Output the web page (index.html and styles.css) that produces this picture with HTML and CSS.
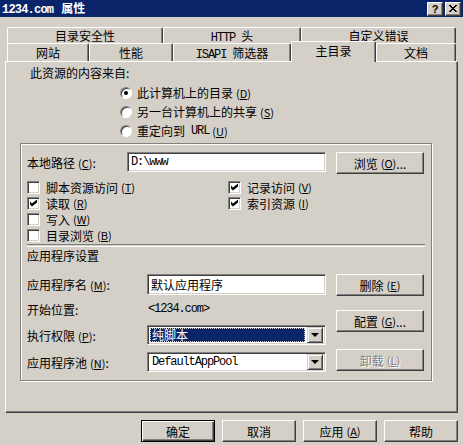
FILE: index.html
```html
<!DOCTYPE html>
<html>
<head>
    <meta charset="UTF-8">
    <title>1234.com 属性</title>
    <link rel="stylesheet" href="styles.css">
</head>
<body>
    <div class="window">
        <div class="titlebar">
            <span class="title"><span class="mono gap">1234.com</span>属性</span>
            <div class="caption-buttons">
                <span class="cap-btn">?</span>
                <span class="cap-btn">
                    <svg width="8" height="7" viewBox="0 0 8 7" shape-rendering="crispEdges">
                        <path d="M0 0h2v1h-2zM6 0h2v1h-2zM1 1h2v1h-2zM5 1h2v1h-2zM2 2h4v1h-4zM3 3h2v1h-2zM2 4h4v1h-4zM1 5h2v1h-2zM5 5h2v1h-2zM0 6h2v1h-2zM6 6h2v1h-2z" fill="#000"/>
                    </svg>
                </span>
            </div>
        </div>

        <div class="tabs">
            <div class="tab-row back">
                <div class="tab" style="width:156px">目录安全性</div>
                <div class="tab" style="width:138px"><span class="mono gap">HTTP</span>头</div>
                <div class="tab" style="width:155px">自定义错误</div>
            </div>
            <div class="tab-row front">
                <div class="tab" style="width:82px">网站</div>
                <div class="tab" style="width:84px">性能</div>
                <div class="tab" style="width:118px"><span class="mono gap">ISAPI</span>筛选器</div>
                <div class="tab active" style="width:85px">主目录</div>
                <div class="tab" style="width:80px">文档</div>
            </div>
        </div>

        <div class="panel">
            <div class="source-label">此资源的内容来自:</div>
            <div class="radio-list">
                <div class="radio-row"><span class="radio checked"></span>此计算机上的目录<span class="key">(<u>D</u>)</span></div>
                <div class="radio-row"><span class="radio"></span>另一台计算机上的共享<span class="key">(<u>S</u>)</span></div>
                <div class="radio-row"><span class="radio"></span>重定向到<span class="mono lead">URL</span><span class="key">(<u>U</u>)</span></div>
            </div>

            <div class="group">
                <div class="path-row">
                    <span class="path-label">本地路径<span class="key">(<u>C</u>)</span>:</span>
                    <div class="field path-field mono">D:\www</div>
                    <span class="btn browse-btn">浏览<span class="key">(<u>O</u>)</span>...</span>
                </div>

                <div class="checks">
                    <div class="check-col">
                        <div class="check-row"><span class="checkbox"></span>脚本资源访问<span class="key">(<u>T</u>)</span></div>
                        <div class="check-row"><span class="checkbox checked"></span>读取<span class="key">(<u>R</u>)</span></div>
                        <div class="check-row"><span class="checkbox"></span>写入<span class="key">(<u>W</u>)</span></div>
                        <div class="check-row"><span class="checkbox"></span>目录浏览<span class="key">(<u>B</u>)</span></div>
                    </div>
                    <div class="check-col right">
                        <div class="check-row"><span class="checkbox checked"></span>记录访问<span class="key">(<u>V</u>)</span></div>
                        <div class="check-row"><span class="checkbox checked"></span>索引资源<span class="key">(<u>I</u>)</span></div>
                    </div>
                </div>

                <div class="separator"></div>
                <div class="app-title">应用程序设置</div>

                <div class="app">
                    <div class="app-fields">
                        <div class="app-row name-row">
                            <span class="app-label">应用程序名<span class="key">(<u>M</u>)</span>:</span>
                            <div class="field app-field">默认应用程序</div>
                        </div>
                        <div class="app-row start-row">
                            <span class="app-label">开始位置:</span>
                            <span class="mono start-value">&lt;1234.com&gt;</span>
                        </div>
                        <div class="app-row perm-row">
                            <span class="app-label">执行权限<span class="key">(<u>P</u>)</span>:</span>
                            <div class="field combo">
                                <span class="combo-value selected">纯脚本</span>
                                <span class="combo-arrow"><span class="arrow"></span></span>
                            </div>
                        </div>
                        <div class="app-row pool-row">
                            <span class="app-label">应用程序池<span class="key">(<u>N</u>)</span>:</span>
                            <div class="field combo">
                                <span class="combo-value mono">DefaultAppPool</span>
                                <span class="combo-arrow"><span class="arrow"></span></span>
                            </div>
                        </div>
                    </div>
                    <div class="app-buttons">
                        <span class="btn side-btn remove-btn">删除<span class="key">(<u>E</u>)</span></span>
                        <span class="btn side-btn config-btn">配置<span class="key">(<u>G</u>)</span>...</span>
                        <span class="btn side-btn unload-btn disabled">卸载<span class="key">(<u>L</u>)</span></span>
                    </div>
                </div>
            </div>
        </div>

        <div class="footer">
            <span class="btn footer-btn default">确定</span>
            <span class="btn footer-btn">取消</span>
            <span class="btn footer-btn">应用<span class="key">(<u>A</u>)</span></span>
            <span class="btn footer-btn">帮助</span>
        </div>
    </div>
</body>
</html>
```

FILE: styles.css
```css
body {
    margin: 0;
    background-color: #d4d0c8;
    font-family: "Noto Sans CJK SC", sans-serif;
    font-size: 12px;
    color: #000;
}
.window {
    width: 463px;
    height: 445px;
    overflow: hidden;
}
.mono {
    font-family: "Liberation Mono", monospace;
    font-size: 12px;
    letter-spacing: -1.1px;
}
.mono.gap {
    margin-right: 6px;
}
.mono.lead {
    margin-left: 6px;
}
.key {
    margin-left: 3px;
    font-size: 11px;
}
u {
    text-decoration: underline;
    text-underline-offset: 1px;
}

/* title bar */
.titlebar {
    height: 17px;
    background-color: #0a246a;
    display: flex;
    align-items: center;
    padding: 0 2px 0 2px;
    color: #fff;
}
.title {
    font-weight: bold;
    font-size: 12px;
    line-height: 16px;
}
.title .mono {
    font-weight: bold;
    letter-spacing: -0.8px;
    margin-right: 8px;
}
.caption-buttons {
    margin-left: auto;
    display: flex;
    gap: 2px;
}
.cap-btn {
    width: 16px;
    height: 14px;
    box-sizing: border-box;
    background-color: #d4d0c8;
    border: 1px solid;
    border-color: #fff #404040 #404040 #fff;
    box-shadow: inset -1px -1px #808080;
    display: flex;
    align-items: center;
    justify-content: center;
    color: #000;
    font-family: "Liberation Sans", sans-serif;
    font-weight: bold;
    font-size: 11px;
}

/* tabs */
.tabs {
    margin-top: 10px;
    padding-left: 7px;
}
.tab-row {
    display: flex;
}
.tab-row.back {
    height: 16px;
}
.tab-row.front {
    height: 18px;
}
.tab {
    box-sizing: border-box;
    border-top: 1px solid #fff;
    border-left: 1px solid #fff;
    border-right: 1px solid #404040;
    box-shadow: inset -1px 0 #808080;
    border-radius: 2px 2px 0 0;
    text-align: center;
    background-color: #d4d0c8;
}
.back .tab {
    line-height: 15px;
}
.front .tab {
    line-height: 17px;
}
.tab.active {
    position: relative;
    z-index: 1;
    height: 21px;
    margin-top: -2px;
    line-height: 17px;
}

/* main panel */
.panel {
    margin: 0 5px;
    height: 352px;
    box-sizing: border-box;
    border: 1px solid;
    border-color: #fff #404040 #404040 #fff;
    box-shadow: inset -1px -1px #808080;
}
.source-label {
    margin: 3px 0 0 24px;
    line-height: 16px;
}
.radio-list {
    margin: 2px 0 0 114px;
}
.radio-row {
    height: 19px;
    display: flex;
    align-items: center;
}
.radio {
    width: 12px;
    height: 12px;
    box-sizing: border-box;
    border-radius: 50%;
    background-color: #fff;
    border: 1px solid;
    border-color: #808080 #fff #fff #808080;
    box-shadow: inset 1px 1px #404040;
    margin-right: 5px;
    display: flex;
    align-items: center;
    justify-content: center;
}
.radio.checked::after {
    content: "";
    width: 4px;
    height: 4px;
    border-radius: 50%;
    background-color: #000;
}

/* group box */
.group {
    margin: 3px 0 0 14px;
    width: 412px;
    height: 238px;
    box-sizing: border-box;
    border: 1px solid #808080;
    box-shadow: 1px 1px #fff, inset 1px 1px #fff;
    padding: 0 0 0 6px;
}
.field {
    box-sizing: border-box;
    background-color: #fff;
    border: 1px solid;
    border-color: #808080 #fff #fff #808080;
    box-shadow: inset 1px 1px #404040, inset -1px -1px #d4d0c8;
    display: flex;
    align-items: center;
    padding-left: 3px;
}
.btn {
    box-sizing: border-box;
    display: flex;
    align-items: center;
    justify-content: center;
    background-color: #d4d0c8;
    border: 1px solid;
    border-color: #fff #404040 #404040 #fff;
    box-shadow: inset -1px -1px #808080;
}
.btn.default {
    border-color: #000;
    box-shadow: inset 1px 1px #fff, inset -1px -1px #404040, inset -2px -2px #808080;
}
.btn.disabled {
    color: #808080;
    text-shadow: 1px 1px #fff;
}

.path-row {
    margin-top: 8px;
    display: flex;
    align-items: flex-start;
}
.path-label {
    width: 100px;
    line-height: 21px;
}
.path-field {
    width: 199px;
    height: 20px;
}
.browse-btn {
    margin-left: 10px;
    width: 88px;
    height: 22px;
}

.checks {
    margin-top: 5px;
    display: flex;
}
.check-col {
    width: 201px;
}
.check-row {
    height: 16px;
    display: flex;
    align-items: center;
}
.checkbox {
    width: 13px;
    height: 13px;
    box-sizing: border-box;
    background-color: #fff;
    border: 1px solid;
    border-color: #808080 #fff #fff #808080;
    box-shadow: inset 1px 1px #404040, inset -1px -1px #d4d0c8;
    margin-right: 6px;
    display: flex;
    align-items: center;
    justify-content: center;
}
.checkbox.checked::after {
    content: "";
    width: 7px;
    height: 7px;
    background-color: #000;
    clip-path: polygon(0 28%, 28% 57%, 100% 0, 100% 43%, 28% 100%, 0 71%);
}

.separator {
    margin-top: 1px;
    width: 398px;
    height: 1px;
    border-top: 1px solid #808080;
    border-bottom: 1px solid #fff;
}
.app-title {
    margin-top: 1px;
    line-height: 16px;
}

.app {
    margin-top: 10px;
    display: flex;
}
.app-fields {
    width: 299px;
}
.app-row {
    display: flex;
    align-items: center;
}
.app-label {
    width: 120px;
}
.name-row {
    height: 21px;
}
.start-row {
    height: 20px;
    margin-top: 4px;
}
.perm-row {
    height: 20px;
    margin-top: 6px;
}
.pool-row {
    height: 20px;
    margin-top: 7px;
}
.app-field {
    width: 179px;
    height: 21px;
}
.start-value {
    padding-left: 1px;
}
.combo {
    width: 179px;
    height: 20px;
    padding: 2px;
}
.combo-value {
    flex: 1;
    height: 14px;
    line-height: 14px;
    padding-left: 2px;
}
.combo-value.selected {
    background-color: #0a246a;
    color: #fff;
    outline: 1px dotted #d4d0c8;
    outline-offset: -1px;
}
.combo-arrow {
    width: 16px;
    height: 16px;
    box-sizing: border-box;
    background-color: #d4d0c8;
    border: 1px solid;
    border-color: #d4d0c8 #404040 #404040 #d4d0c8;
    box-shadow: inset 1px 1px #fff, inset -1px -1px #808080;
    display: flex;
    align-items: center;
    justify-content: center;
    margin-left: 2px;
}
.arrow {
    width: 0;
    height: 0;
    border-left: 4px solid transparent;
    border-right: 4px solid transparent;
    border-top: 4px solid #000;
}

.app-buttons {
    margin-left: 10px;
    display: flex;
    flex-direction: column;
}
.side-btn {
    width: 88px;
    height: 22px;
}
.config-btn {
    margin-top: 14px;
}
.unload-btn {
    margin-top: 17px;
}

/* bottom buttons */
.footer {
    margin-top: 7px;
    padding-right: 5px;
    display: flex;
    justify-content: flex-end;
    gap: 7px;
}
.footer-btn {
    width: 74px;
    height: 22px;
}
```
